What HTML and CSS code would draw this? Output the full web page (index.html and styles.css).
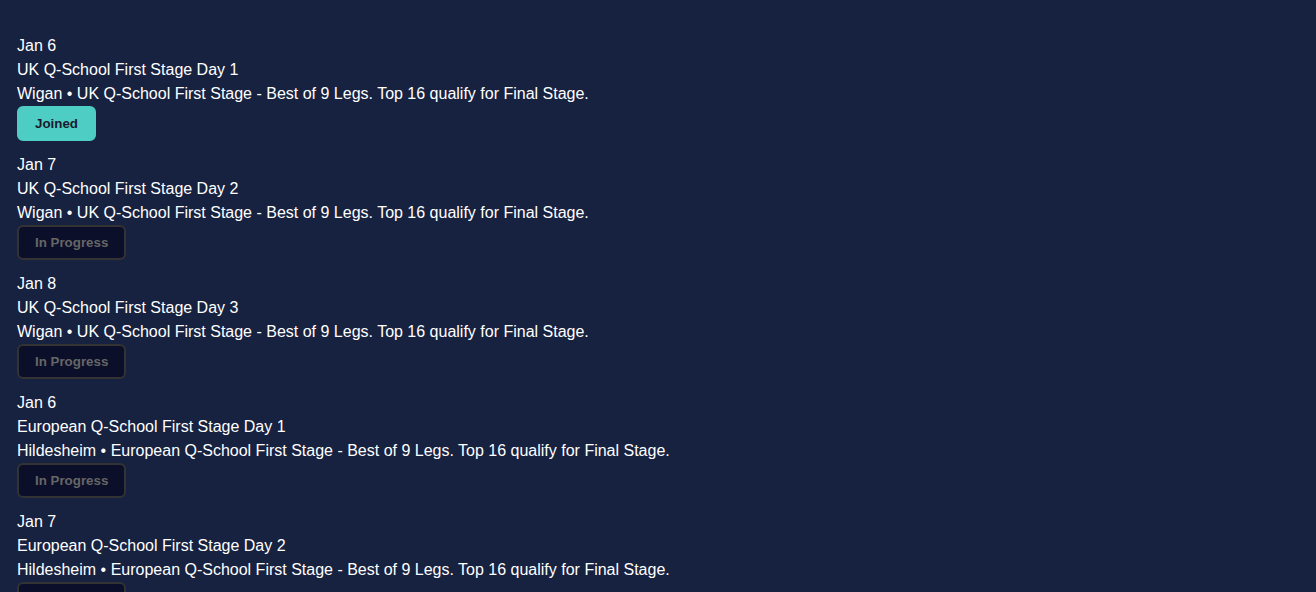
FILE: index.html
```html
<!DOCTYPE html>
<html>
<head>
    <title>Tournaments</title>
    <link rel="stylesheet" href="styles.css">
</head>
<body>
    <div class="events">
        <div class="event">
            <div class="line">Jan 6</div>
            <div class="line">UK Q-School First Stage Day 1</div>
            <div class="line">Wigan • UK Q-School First Stage - Best of 9 Legs. Top 16 qualify for Final Stage.</div>
            <button class="btn joined">Joined</button>
        </div>
        <div class="event">
            <div class="line">Jan 7</div>
            <div class="line">UK Q-School First Stage Day 2</div>
            <div class="line">Wigan • UK Q-School First Stage - Best of 9 Legs. Top 16 qualify for Final Stage.</div>
            <button class="btn progress">In Progress</button>
        </div>
        <div class="event">
            <div class="line">Jan 8</div>
            <div class="line">UK Q-School First Stage Day 3</div>
            <div class="line">Wigan • UK Q-School First Stage - Best of 9 Legs. Top 16 qualify for Final Stage.</div>
            <button class="btn progress">In Progress</button>
        </div>
        <div class="event">
            <div class="line">Jan 6</div>
            <div class="line">European Q-School First Stage Day 1</div>
            <div class="line">Hildesheim • European Q-School First Stage - Best of 9 Legs. Top 16 qualify for Final Stage.</div>
            <button class="btn progress">In Progress</button>
        </div>
        <div class="event">
            <div class="line">Jan 7</div>
            <div class="line">European Q-School First Stage Day 2</div>
            <div class="line">Hildesheim • European Q-School First Stage - Best of 9 Legs. Top 16 qualify for Final Stage.</div>
            <button class="btn progress">In Progress</button>
        </div>
        <div class="event">
            <div class="line">Jan 8</div>
            <div class="line">European Q-School First Stage Day 3</div>
            <div class="line">Hildesheim • European Q-School First Stage - Best of 9 Legs. Top 16 qualify for Final Stage.</div>
            <button class="btn progress">In Progress</button>
        </div>
        <div class="event">
            <div class="line">Jan 10</div>
            <div class="line">UK Q-School Final Stage Day 1</div>
            <div class="line">Wigan • UK Q-School Final Stage - Best of 9 Legs. Tour Cards awarded.</div>
            <button class="btn progress">In Progress</button>
        </div>
    </div>
</body>
</html>
```

FILE: styles.css
```css
body {
    background: #172140;
    color: #fff;
    font-family: 'Liberation Sans', Arial, sans-serif;
    font-size: 16px;
    margin: 0;
    padding: 34px 17px 20px;
}
.event {
    padding-bottom: 12px;
}
.line {
    line-height: 24px;
}
.btn {
    display: block;
    margin: 0;
    padding: 8px 16px;
    border: 2px solid transparent;
    border-radius: 6px;
    font-family: 'Liberation Sans', Arial, sans-serif;
    font-size: 13.333px;
    font-weight: bold;
    line-height: 15px;
    cursor: pointer;
}
.joined {
    background: #4ecdc4;
    border-color: #4ecdc4;
    color: #1a1a2e;
}
.progress {
    background: #0c0f29;
    border-color: #333;
    color: #666;
}
```
